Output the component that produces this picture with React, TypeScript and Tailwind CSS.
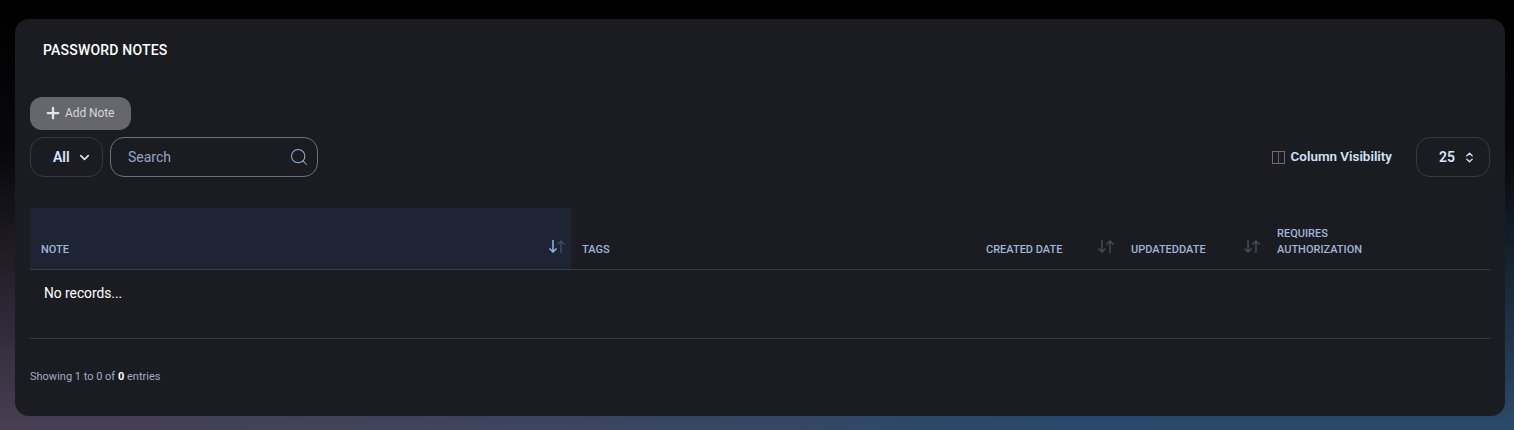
import { ChevronDown, ChevronsUpDown, Plus, Search } from 'lucide-react';

function SortIcon({ active = false }: { active?: boolean }) {
  const down = active ? '#93b4e6' : '#484a53';
  const up = active ? '#434a5c' : '#484a53';
  return (
    <svg width="16" height="13" viewBox="0 0 16 13" fill="none" strokeWidth="1.5" className="mb-[5px]">
      <path d="M4 0v12M0.5 8.5l3.5 3.5 3.5-3.5" stroke={down} />
      <path d="M12 13V1M8.5 4.5l3.5-3.5 3.5 3.5" stroke={up} />
    </svg>
  );
}

const headClass = 'text-[11px] leading-[16px] font-medium uppercase text-[#a3b4d9]';

export default function App() {
  return (
    <div className="h-[430px] w-[1514px] overflow-hidden px-[15px] pt-[19px] font-['Roboto',sans-serif] bg-[linear-gradient(180deg,#000000_0%,#08080b_35%,rgba(0,0,0,0)_100%),linear-gradient(90deg,#483f53_0%,#3f4660_35%,#2a4a6c_70%,#2b4a6a_100%)]">
      <div className="h-[397px] w-[1490px] rounded-[14px] bg-[#1b1c21] px-[15px]">
        <h1 className="pl-[13px] pt-[22px] text-sm leading-[18px] font-medium tracking-[0.2px] text-white">PASSWORD NOTES</h1>

        <button className="mt-[38px] flex h-[33px] w-[101px] items-center gap-[3px] rounded-[12px] bg-[#66676c] pb-[1px] pl-[14px] text-xs tracking-[-0.1px] text-[#d6d6d8]">
          <Plus size={18} strokeWidth={3} className="text-[#e4e4e6]" />
          Add Note
        </button>

        <div className="mt-[7px] flex h-10 items-center">
          <div className="flex h-10 w-[73px] items-center gap-[7px] rounded-[14px] border border-[#383a41] pl-[22px] text-sm font-semibold text-[#dbe7ff]">
            All
            <ChevronDown size={15} strokeWidth={2.5} />
          </div>
          <div className="ml-[7px] flex h-10 w-[208px] items-center justify-between rounded-[14px] border border-[#70717e] pl-[17px] pr-[8px] text-sm text-[#97a3c8]">
            Search
            <Search size={20} strokeWidth={1.25} className="text-[#8fb0dc]" />
          </div>
          <div className="ml-auto flex items-center">
            <svg width="13" height="13" viewBox="0 0 13 13" fill="none">
              <rect x="0.5" y="0.5" width="12" height="12" stroke="#6f6a78" />
              <path d="M6.5 1v11" stroke="#7a5560" />
            </svg>
            <span className="ml-[6px] text-[13.4px] font-semibold text-[#d3e1fb]">Column Visibility</span>
            <div className="ml-[24px] flex h-10 w-[74px] items-center gap-[8px] rounded-[14px] border border-[#383a41] pl-[22px] text-sm font-semibold text-[#dbe7ff]">
              25
              <ChevronsUpDown size={13} strokeWidth={2.5} />
            </div>
          </div>
        </div>

        <div className="mt-[31px] flex h-[62px] border-b border-[#3a3b40]">
          <div className="flex w-[541px] items-end justify-between bg-[#1e2433] pb-[11px] pl-[11px] pr-[6px]">
            <span className={headClass}>Note</span>
            <SortIcon active />
          </div>
          <div className="flex w-[404px] items-end pb-[11px] pl-[11px]">
            <span className={headClass}>Tags</span>
          </div>
          <div className="flex w-[145px] items-end justify-between pb-[11px] pl-[11px] pr-[6px]">
            <span className={headClass}>Created Date</span>
            <SortIcon />
          </div>
          <div className="flex w-[146px] items-end justify-between pb-[11px] pl-[11px] pr-[6px]">
            <span className={headClass}>UpdatedDate</span>
            <SortIcon />
          </div>
          <div className="flex flex-1 items-end pb-[11px] pl-[11px]">
            <span className={headClass}>Requires<br />Authorization</span>
          </div>
        </div>

        <div className="h-[69px] border-b border-[#3a3b40] pl-[14px] pt-[13px] text-[13.75px] leading-[20px] text-white">No records...</div>

        <p className="mt-[30px] text-[11px] leading-4 text-[#a3a9c4]">
          Showing 1 to 0 of <b className="font-bold text-white">0</b> entries
        </p>
      </div>
    </div>
  );
}
